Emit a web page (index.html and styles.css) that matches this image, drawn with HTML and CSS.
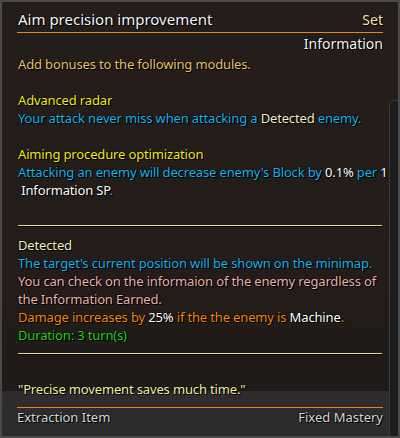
FILE: index.html
```
<!DOCTYPE html>
<html>
<head>
<meta charset="utf-8">
<link rel="stylesheet" href="styles.css">
</head>
<body>
<div class="tooltip">
  <div class="head">
    <span class="title">Aim precision improvement</span>
    <span class="set">Set</span>
  </div>
  <div class="category">Information</div>
  <p class="line intro">Add bonuses to the following modules.</p>
  <div class="module">
    <p class="line mname">Advanced radar</p>
    <p class="line cyan">Your attack never miss when attacking a <span class="pale">Detected</span> enemy.</p>
  </div>
  <div class="module">
    <p class="line mname">Aiming procedure optimization</p>
    <p class="line cyan">Attacking an enemy will decrease enemy's Block by <span class="white">0.1%</span> per <span class="white">1</span><br><span class="white">&nbsp;Information SP</span>.</p>
  </div>
  <div class="rule first"></div>
  <div class="status">
    <p class="line sname">Detected</p>
    <p class="line cyan">The target's current position will be shown on the minimap.</p>
    <p class="line pink">You can check on the informaion of the enemy regardless of<br>the Information Earned.</p>
    <p class="line orange">Damage increases by <span class="white">25%</span> if the the enemy is <span class="white">Machine</span>.</p>
    <p class="line green">Duration: 3 turn(s)</p>
  </div>
  <div class="rule second"></div>
  <p class="line quote">"Precise movement saves much time."</p>
  <div class="footer">
    <div class="footrow">
      <span>Extraction Item</span>
      <span>Fixed Mastery</span>
    </div>
  </div>
  <div class="scrollbar"></div>
</div>
</body>
</html>
```
FILE: styles.css
```
* { box-sizing: border-box; }
html, body { margin: 0; padding: 0; background: #2a2a2a; }
body { width: 400px; height: 438px; overflow: hidden; }

.tooltip {
  position: relative;
  width: 400px;
  height: 438px;
  border: 2px solid #4a4a4a;
  background: linear-gradient(to bottom, #251d19 0%, #231c19 70%, #1c1a19 100%);
  font-family: "Noto Sans", "Open Sans", sans-serif;
  font-size: 13px;
  line-height: 18px;
  color: #fff;
  text-shadow: 1px 1px 0 #000, 0 0 1px #000, 0 0 1px #000;
  display: flex;
  flex-direction: column;
  padding: 8px 0 0 16px;
  overflow: hidden;
}

.head {
  display: flex;
  justify-content: space-between;
  align-items: baseline;
  width: 366px;
  margin-left: -1px;
  padding-left: 1px;
  padding-bottom: 3px;
  border-bottom: 1px solid #e5861f;
  font-size: 15px;
}
.title { color: #f6f6f6; }
.set { color: #f5e6a8; font-size: 14px; }

.category {
  width: 365px;
  text-align: right;
  font-size: 14px;
  color: #f4f4f4;
  margin-top: 2px;
}

.line { margin: 0; white-space: nowrap; letter-spacing: -0.15px; }
.intro { color: #e6c46a; margin-top: 2px; }
.module { margin-top: 18px; }
.mname { color: #f2ea18; }
.cyan { color: #19b4e8; }
.pale { color: #f3f0c4; }
.white { color: #ffffff; }
.pink { color: #e8b4a8; }
.orange { color: #f08a10; }
.green { color: #28d018; }
.sname { color: #f0ecc0; }
.quote { color: #f2f0a0; margin-top: 16px; position: relative; z-index: 2; }

.rule {
  width: 364px;
  height: 1px;
  background: #f0d898;
  margin-bottom: 10px;
  box-shadow: 0 1px 0 #000;
}
.rule.first { margin-top: 26px; }
.rule.second { margin-top: 9px; }

.footer {
  margin-left: -16px;
  margin-top: -7px;
  width: 387px;
  flex: 1;
  background: rgba(48, 47, 47, 0.9);
  padding: 16px 0 0 15px;
  position: relative;
  z-index: 1;
}
.footrow {
  width: 366px;
  display: flex;
  justify-content: space-between;
  border-top: 1px solid #f08010;
  color: #d8d8d8;
  font-size: 13px;
  line-height: 18px;
}

.scrollbar {
  position: absolute;
  left: 387px;
  top: 98px;
  width: 9px;
  bottom: 0;
  background: #1c1c1e;
  border-top: 1px solid #3a3a3a;
  border-left: 1px solid #3a3a3a;
  border-top-left-radius: 5px;
}
```
